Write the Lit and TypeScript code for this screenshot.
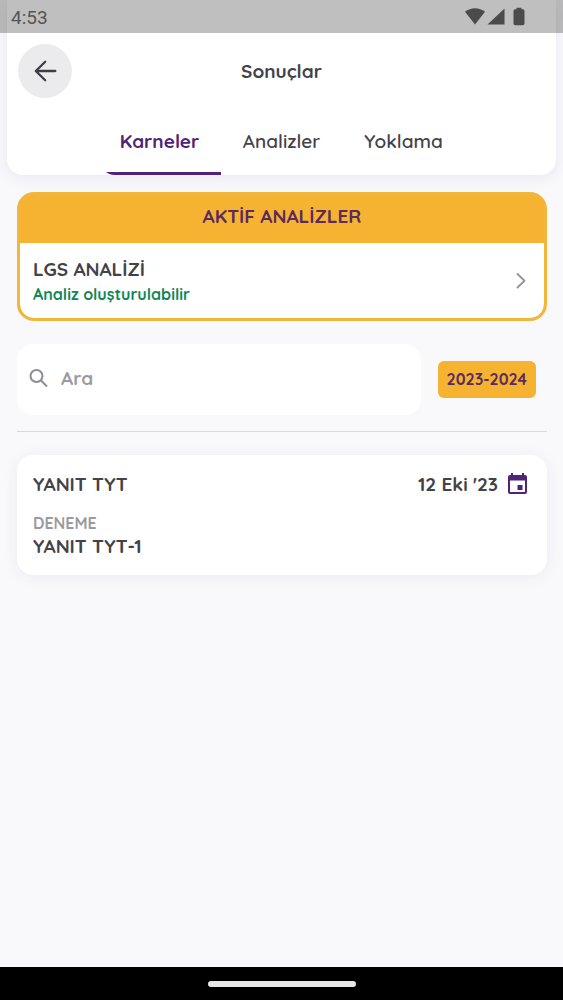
import { LitElement, html, css } from "lit";
import { customElement, property, state } from "lit/decorators.js";
import { classMap } from "lit/directives/class-map.js";

const buttonReset = css`
  * {
    box-sizing: border-box;
  }
  button {
    margin: 0;
    padding: 0;
    border: 0;
    background: none;
    color: inherit;
    font: inherit;
    text-align: inherit;
    cursor: pointer;
  }
  svg {
    display: block;
    flex: none;
  }
`;

@customElement("status-bar")
class StatusBar extends LitElement {
  @property() time = "";

  static styles = [
    buttonReset,
    css`
      :host {
        display: flex;
        align-items: center;
        justify-content: space-between;
        height: 33px;
        padding: 0 36px 0 11px;
        background: rgba(0, 0, 0, 0.25);
        color: #555;
        font: 400 19px/33px Roboto, sans-serif;
      }
      .time {
        padding-top: 2px;
      }
    `,
  ];

  render() {
    return html`
      <span class="time">${this.time}</span>
      <svg width="62" height="20" viewBox="0 0 62 20" fill="#4b4b4b" aria-hidden="true">
        <path d="M0 4.800C5.600 0 14.400 0 20 4.800L10 17.500Z" />
        <path d="M39.500 1.500V17.500H22.500Z" />
        <path d="M48.500 4Q48.500 2.300 50.200 2.300H51.500V.800H56.500V2.300H57.800Q59.500 2.300 59.500 4V16.500Q59.500 18.300 57.700 18.300H50.300Q48.500 18.300 48.500 16.500Z" />
      </svg>
    `;
  }
}

@customElement("page-header")
class PageHeader extends LitElement {
  @property() heading = "";
  @property({ attribute: false }) tabs: string[] = [];
  @state() private active = 0;

  static styles = [
    buttonReset,
    css`
      :host {
        display: block;
        margin: 0 7px;
        padding-top: 33px;
        border-radius: 0 0 16px 16px;
        background: #fff;
        box-shadow: 0 2px 16px rgba(60, 50, 110, 0.09);
      }
      .bar {
        display: grid;
        grid-template-columns: 54px 1fr 54px;
        align-items: center;
        padding: 11px 11px 10px;
      }
      .back {
        display: grid;
        place-items: center;
        width: 54px;
        height: 54px;
        border-radius: 50%;
        background: #ebebed;
      }
      .title {
        margin: 0;
        text-align: center;
        font-size: 19px;
        line-height: 24px;
        font-weight: 700;
      }
      .tabs {
        display: flex;
        width: fit-content;
        margin: 0 auto;
        border-radius: 16px;
        overflow: hidden;
      }
      .tab {
        width: 122px;
        height: 67px;
        padding-top: 1px;
        border-bottom: 3px solid transparent;
        text-align: center;
        font-size: 19px;
        line-height: 24px;
        font-weight: 600;
      }
      .tab.active {
        border-color: #4f2375;
        color: #4f2375;
        font-weight: 700;
      }
    `,
  ];

  render() {
    return html`
      <div class="bar">
        <button class="back" aria-label="Geri">
          <svg width="24" height="24" viewBox="0 0 24 24" fill="none" stroke="#3f3d45" stroke-width="2.300" stroke-linecap="round" stroke-linejoin="round">
            <path d="M22.300 12H2.800M12.200 2.800L2.800 12L12.200 21.200" />
          </svg>
        </button>
        <h1 class="title">${this.heading}</h1>
      </div>
      <div class="tabs" role="tablist">
        ${this.tabs.map(
          (label, i) => html`<button
            role="tab"
            aria-selected=${i === this.active}
            class=${classMap({ tab: true, active: i === this.active })}
            @click=${() => (this.active = i)}
          >${label}</button>`
        )}
      </div>
    `;
  }
}

@customElement("active-analyses")
class ActiveAnalyses extends LitElement {
  static styles = [
    buttonReset,
    css`
      :host {
        display: block;
        border: 3px solid #f0b73c;
        border-radius: 17px;
        background: #f6b332;
        overflow: hidden;
      }
      .heading {
        margin: 0;
        padding: 9px 0 15px;
        color: #5b2a5e;
        text-align: center;
        font-size: 19px;
        line-height: 24px;
        font-weight: 700;
      }
      .row {
        display: flex;
        align-items: center;
        justify-content: space-between;
        width: 100%;
        padding: 13px 15px 12px 13px;
        border-radius: 0 0 14px 14px;
        background: #fff;
      }
      .name,
      .status {
        display: block;
        font-size: 19px;
        line-height: 26px;
        font-weight: 700;
      }
      .status {
        color: #11875a;
        font-size: 16px;
        line-height: 24px;
      }
    `,
  ];

  render() {
    return html`
      <h2 class="heading">AKTİF ANALİZLER</h2>
      <button class="row">
        <span>
          <span class="name">LGS ANALİZİ</span>
          <span class="status">Analiz oluşturulabilir</span>
        </span>
        <svg width="16" height="18" viewBox="0 0 16 18" fill="none" stroke="#96969d" stroke-width="1.900" stroke-linecap="round" stroke-linejoin="round" aria-hidden="true">
          <path d="M4.500 2L11.500 8.700L4.500 15.500" />
        </svg>
      </button>
    `;
  }
}

@customElement("search-bar")
class SearchBar extends LitElement {
  static styles = [
    buttonReset,
    css`
      :host {
        display: flex;
        align-items: center;
        gap: 17px;
        padding: 0 11px 16px 0;
        border-bottom: 1px solid #d9d8de;
      }
      .field {
        display: flex;
        flex: 1;
        align-items: center;
        gap: 12px;
        min-width: 0;
        height: 71px;
        padding: 0 12px 3px;
        border-radius: 16px;
        background: #fff;
      }
      .input {
        flex: 1;
        min-width: 0;
        padding: 0;
        border: 0;
        outline: 0;
        background: none;
        color: #3f3d45;
        font: inherit;
        font-size: 19px;
        line-height: 24px;
        font-weight: 700;
      }
      .input::placeholder {
        color: #9b9aa1;
        opacity: 1;
      }
      .year {
        height: 37px;
        padding: 0 9px;
        border-radius: 6px;
        background: #f6b332;
        color: #5b2a5e;
        text-align: center;
        font-size: 16px;
        line-height: 37px;
        font-weight: 700;
      }
    `,
  ];

  render() {
    return html`
      <label class="field">
        <svg width="20" height="20" viewBox="0 0 20 20" fill="none" stroke="#8d8c92" stroke-width="2" aria-hidden="true">
          <circle cx="7.500" cy="8" r="6" />
          <path d="M12 12.500L18 18.500" />
        </svg>
        <input class="input" type="search" placeholder="Ara" aria-label="Ara" />
      </label>
      <button class="year">2023-2024</button>
    `;
  }
}

@customElement("report-card")
class ReportCard extends LitElement {
  @property() name = "";
  @property() date = "";
  @property() kind = "";
  @property() exam = "";

  static styles = [
    buttonReset,
    css`
      :host {
        display: block;
        padding: 16px 18px 16px 16px;
        border-radius: 16px;
        background: #fff;
        box-shadow: 0 2px 16px rgba(60, 50, 80, 0.07);
        font-size: 19px;
        line-height: 26px;
        font-weight: 700;
      }
      .top,
      .date {
        display: flex;
        align-items: center;
        justify-content: space-between;
      }
      .date {
        gap: 10px;
      }
      .kind {
        margin-top: 16px;
        color: #9b9aa1;
        font-size: 16px;
        line-height: 20px;
        font-weight: 700;
      }
    `,
  ];

  render() {
    return html`
      <div class="top">
        <span>${this.name}</span>
        <span class="date">
          ${this.date}
          <svg width="21" height="23" viewBox="0 0 21 23" aria-hidden="true">
            <path fill="#4f2375" fill-rule="evenodd" d="M3 0H5V2H14V0H16V2H17Q19 2 19 4V19Q19 21 17 21H2Q0 21 0 19V4Q0 2 2 2H3ZM2 7.500V19H17V7.500Z" />
            <path fill="#4f2375" d="M9.500 12H14.500V17H9.500Z" />
          </svg>
        </span>
      </div>
      <div class="kind">${this.kind}</div>
      <div>${this.exam}</div>
    `;
  }
}

@customElement("app-root")
class AppRoot extends LitElement {
  static styles = [
    buttonReset,
    css`
      :host {
        position: relative;
        display: flex;
        flex-direction: column;
        min-height: 100vh;
        background: #f9f8fb;
        color: #444249;
        font-family: Quicksand, Inter, sans-serif;
      }
      .status {
        position: absolute;
        inset: 0 0 auto;
        z-index: 1;
      }
      .content {
        display: flex;
        flex: 1;
        flex-direction: column;
        gap: 23px;
        padding: 17px 16px 22px 17px;
      }
      .navigation {
        display: grid;
        place-items: center;
        height: 33px;
        background: #000;
      }
      .handle {
        width: 148px;
        height: 6px;
        border-radius: 3px;
        background: #e8e8e8;
      }
    `,
  ];

  render() {
    return html`
      <status-bar class="status" time="4:53"></status-bar>
      <page-header heading="Sonuçlar" .tabs=${["Karneler", "Analizler", "Yoklama"]}></page-header>
      <main class="content">
        <active-analyses></active-analyses>
        <search-bar></search-bar>
        <report-card name="YANIT TYT" date="12 Eki '23" kind="DENEME" exam="YANIT TYT-1"></report-card>
      </main>
      <div class="navigation"><div class="handle"></div></div>
    `;
  }
}
